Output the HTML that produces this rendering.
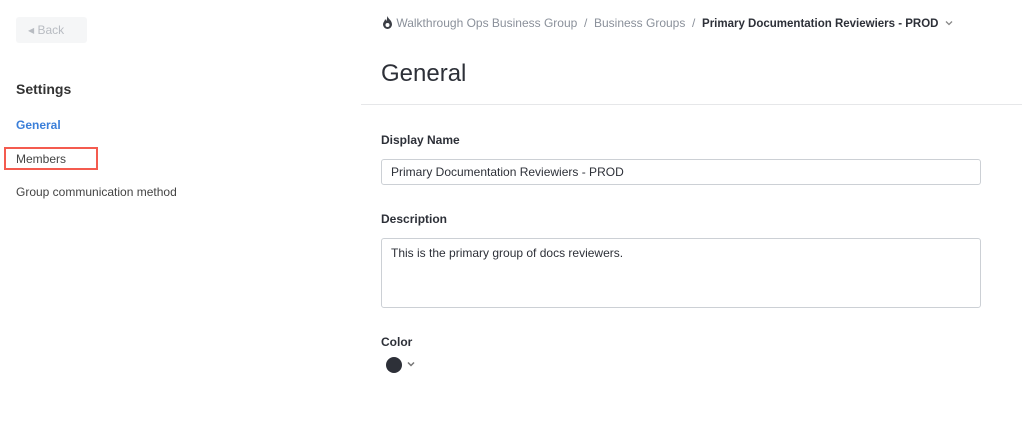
<!DOCTYPE html>
<html><head><meta charset="utf-8"><style>
*{margin:0;padding:0;box-sizing:border-box}
body{width:1022px;height:424px;background:#fff;font-family:"Liberation Sans",sans-serif;position:relative;overflow:hidden;color:#2d3038}
.a{position:absolute;white-space:nowrap}
</style></head><body>
<div class="a" style="left:16px;top:17px;width:71px;height:26px;background:#f5f6f7;border-radius:3px;color:#b8bcc2;font-size:12px;line-height:26px;padding-left:12px"><span style="font-size:8px;position:relative;top:-1px">◀</span> Back</div>
<div class="a" style="left:16px;top:81px;font-size:14px;font-weight:bold;color:#333">Settings</div>
<div class="a" style="left:16px;top:118px;font-size:12px;font-weight:bold;color:#3b7fd9">General</div>
<div class="a" style="left:4px;top:147px;width:94px;height:23px;border:2px solid #f45b4f"></div>
<div class="a" style="left:16px;top:152px;font-size:12px;color:#444">Members</div>
<div class="a" style="left:16px;top:185px;font-size:12px;color:#444">Group communication method</div>
<div class="a" style="left:382px;top:16px;font-size:12px;color:#8a909a"><svg width="11" height="13" viewBox="0 0 11 13" style="vertical-align:-2px"><path d="M5.5 0C6 3 10 4 10 8.5A4.5 4.5 0 0 1 1 8.5C1 6 3 5 3 3C4 4 4.5 5 4.5 5C5 3 5 1.5 5.5 0Z" fill="#3a3d44"/><circle cx="5.5" cy="9" r="2" fill="#fff"/></svg> Walkthrough Ops Business Group &nbsp;/&nbsp; Business Groups &nbsp;/&nbsp; <span style="color:#2d3038;font-weight:bold;font-size:11.5px">Primary Documentation Reviewiers - PROD</span> &nbsp;<svg width="8" height="6" viewBox="0 0 8 6" style="vertical-align:1px"><path d="M1 1.5L4 4.5L7 1.5" stroke="#888" stroke-width="1.3" fill="none"/></svg></div>
<div class="a" style="left:381px;top:60px;font-size:24px;color:#2d3038">General</div>
<div class="a" style="left:361px;top:104px;width:661px;height:1px;background:#e6e7e9"></div>
<div class="a" style="left:381px;top:133px;font-size:12px;font-weight:bold">Display Name</div>
<div class="a" style="left:381px;top:159px;width:600px;height:26px;border:1px solid #ccd0d5;border-radius:3px;font-size:12px;line-height:24px;padding-left:9px">Primary Documentation Reviewiers - PROD</div>
<div class="a" style="left:381px;top:212px;font-size:12px;font-weight:bold">Description</div>
<div class="a" style="left:381px;top:238px;width:600px;height:70px;border:1px solid #ccd0d5;border-radius:3px;font-size:12px;padding:7px 9px">This is the primary group of docs reviewers.</div>
<div class="a" style="left:381px;top:335px;font-size:12px;font-weight:bold">Color</div>
<div class="a" style="left:386px;top:357px;width:16px;height:16px;border-radius:50%;background:#2d3038"></div>
<svg class="a" style="left:407px;top:361px" width="8" height="6" viewBox="0 0 8 6"><path d="M1 1.5L4 4.5L7 1.5" stroke="#777" stroke-width="1.5" fill="none"/></svg>
</body></html>
